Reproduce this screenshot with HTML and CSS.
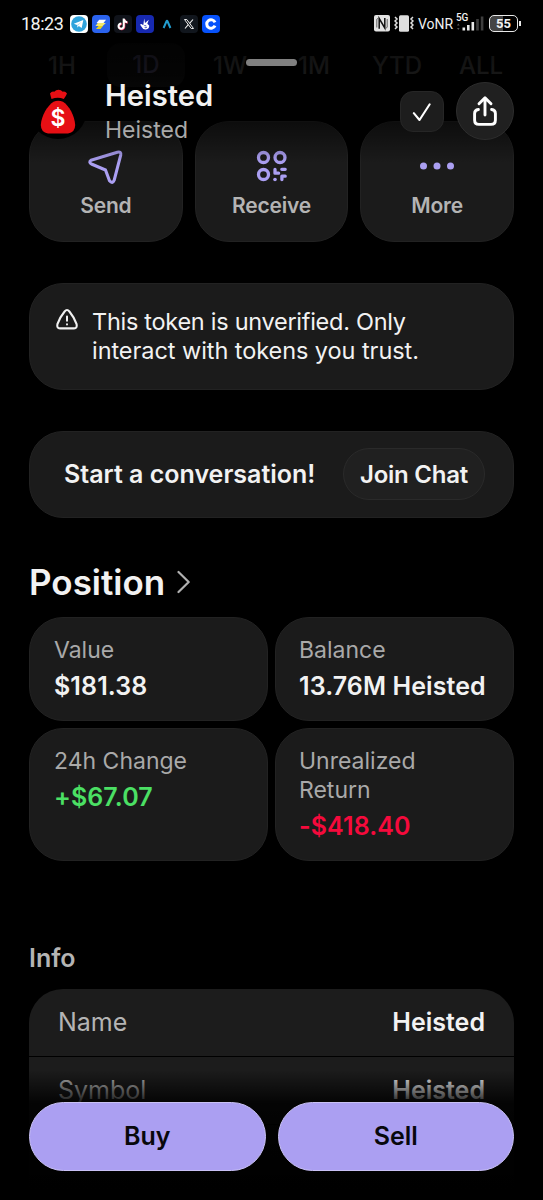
FILE: index.html
```html
<!DOCTYPE html>
<html lang="en">
<head>
<meta charset="utf-8">
<title>Heisted</title>
<link rel="stylesheet" href="styles.css">
</head>
<body>
<div class="screen">
  <main class="content">
    <nav class="ranges">
      <span class="range">1H</span>
      <span class="range range-active">1D</span>
      <span class="range">1W</span>
      <span class="range">1M</span>
      <span class="range">YTD</span>
      <span class="range">ALL</span>
    </nav>

    <section class="actions">
      <div class="card action">
        <svg class="action-icon" width="38" height="38" viewBox="0 0 38 38" fill="none" stroke="#ab9ff2" stroke-width="3.1" stroke-linejoin="round"><path d="M4 12.200L30.300 4.200Q34.500 3.200 33.700 7.100L27.200 32.200Q25.500 36.200 22.500 32.800L18.500 22L5 16.300Q1.200 14.300 4 12.200Z"/></svg>
        <span>Send</span>
      </div>
      <div class="card action">
        <svg class="action-icon receive-icon" width="38" height="38" viewBox="0 0 38 38"><g fill="none" stroke="#ab9ff2" stroke-width="3.3"><circle cx="10.500" cy="9.500" r="5"/><circle cx="27" cy="9.500" r="5"/><circle cx="10.500" cy="26.500" r="5"/></g><g fill="none" stroke="#ab9ff2" stroke-width="3.300" stroke-linecap="round" stroke-linejoin="round"><path d="M22 21.500v3.700h3.600M28.800 21.300h3.400M28.900 31.500v-3.300h3.300"/></g><circle cx="22" cy="31.500" r="1.800" fill="#ab9ff2"/></svg>
        <span class="receive">Receive</span>
      </div>
      <div class="card action">
        <svg class="action-icon" width="38" height="38" viewBox="0 0 38 38" fill="#ab9ff2"><circle cx="5.500" cy="18" r="3.500"/><circle cx="19" cy="18" r="3.500"/><circle cx="32.500" cy="18" r="3.500"/></svg>
        <span>More</span>
      </div>
    </section>

    <section class="card warning">
      <svg class="warning-icon" width="24" height="24" viewBox="0 0 24 24" fill="none" stroke="#f0f0f0" stroke-width="2.100" stroke-linecap="round" stroke-linejoin="round"><path d="M9.600 3.500Q12 .6 14.400 3.500Q19 9 21.600 16.200Q22.500 20.300 19 20.400H5Q1.500 20.300 2.400 16.200Q5 9 9.600 3.500Z"/><path d="M12 8.500v4.200M12 16.200v.2" stroke-width="2"/></svg>
      <p><span class="line-first">This token is unverified. Only</span><br>interact with tokens you trust.</p>
    </section>

    <section class="card chat">
      <span class="chat-text">Start a conversation!</span>
      <button class="join">Join Chat</button>
    </section>

    <h2 class="heading">Position
      <svg width="14" height="24" viewBox="0 0 14 24" fill="none" stroke="#b0b0b0" stroke-width="2.200" stroke-linecap="round" stroke-linejoin="round"><path d="M1.500 2L11.700 12L1.500 22"/></svg>
    </h2>

    <section class="stats">
      <div class="card stat"><span class="label">Value</span><span class="value">$181.38</span></div>
      <div class="card stat"><span class="label">Balance</span><span class="value">13.76M Heisted</span></div>
      <div class="card stat"><span class="label">24h Change</span><span class="value gain">+$67.07</span></div>
      <div class="card stat"><span class="label">Unrealized<br>Return</span><span class="value loss">-$418.40</span></div>
    </section>

    <h3 class="subheading">Info</h3>
    <section class="info">
      <div class="row"><span class="row-name">Name</span><span class="row-value">Heisted</span></div>
      <div class="row"><span class="row-name">Symbol</span><span class="row-value">Heisted</span></div>
      <div class="row"></div>
    </section>
  </main>

  <header class="top">
    <div class="status">
      <span class="clock">18:23</span>
      <div class="apps">
        <svg width="18" height="18" viewBox="0 0 18 18"><rect width="18" height="18" rx="4" fill="#fff"/><circle cx="9" cy="9" r="7.800" fill="#2fa3dc"/><path d="M3.800 8.700L13.300 5L11.700 13L8.800 11L7.400 12.400L7 10Z" fill="#fff"/><path d="M7 10L11.500 6.700L8 10.500L7.400 12.400Z" fill="#a9d6ee"/></svg>
        <svg width="18" height="18" viewBox="0 0 18 18"><rect width="18" height="18" rx="4" fill="#2b63ee"/><path d="M7.200 4.800H14L11.500 8H4.600Z" fill="#fff"/><path d="M5.700 8H13.800L10.700 11H3.500Z" fill="#f5e96b"/><path d="M6.500 11H11L8.500 14H4Z" fill="#e8d21d"/></svg>
        <svg width="18" height="18" viewBox="0 0 18 18"><rect width="18" height="18" rx="4" fill="#10131a"/><g fill="none" stroke-width="2"><path d="M9.700 3.500V11.200A2.600 2.600 0 1 1 7.200 8.600M9.700 4Q10.500 7 13.200 7.200" stroke="#f33a65" transform="translate(.6 .5)"/><path d="M9.700 3.500V11.200A2.600 2.600 0 1 1 7.200 8.600M9.700 4Q10.500 7 13.200 7.200" stroke="#fff"/></g></svg>
        <svg width="18" height="18" viewBox="0 0 18 18"><rect width="18" height="18" rx="4" fill="#1729b0"/><path d="M8.200 3.500L9 8L12.800 4.800L11.300 8.700L13.200 10.500Q13.500 13.800 9.800 14.600Q7 14.800 5.700 12L4 9.500L5.500 9L7.300 10.300Z" fill="#fff"/><path d="M8.300 10.500l2 .4M8.700 12.500q1.300.6 2.200-.3" stroke="#1729b0" stroke-width=".8" fill="none"/></svg>
        <svg width="18" height="18" viewBox="0 0 18 18"><path d="M5.600 13L8.500 6.300Q9 5.400 9.500 6.300L12.400 13" fill="none" stroke="#239ed0" stroke-width="2"/></svg>
        <svg width="18" height="18" viewBox="0 0 18 18"><rect width="18" height="18" rx="4" fill="#11161d"/><path d="M4.500 4.500H6.800L13.500 13.500H11.200Z" fill="none" stroke="#eee" stroke-width="1"/><path d="M13 4.500L9.600 8.400M8.300 9.700L5 13.500" stroke="#eee" stroke-width="1.100"/></svg>
        <svg width="18" height="18" viewBox="0 0 18 18"><rect width="18" height="18" rx="4" fill="#0752fb"/><path d="M13 7.300A4.300 4.300 0 1 0 13 10.700" fill="none" stroke="#fff" stroke-width="3"/></svg>
      </div>
      <div class="signals">
        <svg class="nfc" width="16" height="17" viewBox="0 0 16 17"><rect width="16" height="16.500" rx="2" fill="#e3e3e3"/><path d="M5.200 13.800V3.500L10.800 13V3" fill="none" stroke="#111" stroke-width="1.500"/><path d="M4.500 3L2.800 4.200V12.500M11.500 13.500L13.200 12.300V4" fill="none" stroke="#444" stroke-width=".8"/></svg>
        <svg class="vibrate" width="20" height="17" viewBox="0 0 20 17"><rect x="5" y=".3" width="10" height="16.400" rx="1.500" fill="#dedede"/><path d="M1 2l2 2-2 2 2 2-2 2 2 2-2 2M19 2l-2 2 2 2-2 2 2 2-2 2 2 2" fill="none" stroke="#dedede" stroke-width="1.500"/></svg>
        <span class="vonr">VoNR</span>
        <span class="cell"><span class="gen">5G</span><svg width="28" height="17" viewBox="0 0 28 17"><path d="M1 10.500l1.300-2 1.300 2zM1 13l1.300 2 1.300-2z" fill="#555"/><g fill="#e8e8e8"><rect x="6.500" y="12.500" width="2.600" height="3"/><rect x="11" y="10" width="2.600" height="5.500"/><rect x="15.500" y="7" width="2.600" height="8.500"/></g><g fill="#3d3d3d"><rect x="20.200" y="4" width="2.600" height="11.500"/><rect x="24.800" y="1.500" width="2.600" height="14"/></g></svg></span>
        <span class="battery">55</span>
      </div>
    </div>
    <div class="grabber"></div>
    <div class="title-row">
      <svg class="token" width="58" height="58" viewBox="0 0 58 58"><circle cx="29" cy="29" r="29" fill="#000"/><g fill="#e60f14"><path d="M22.500 18Q21.500 14.500 21 12.500Q23 9.800 25.200 10.800Q27 8.700 29.500 8.700Q32 8.700 33.800 10.800Q36 9.800 38 12.500Q37 15 34.800 18Q29 15.500 22.500 18Z"/><path d="M24.500 20.800Q29 18.800 34 20.800C40.500 25 45.500 35 46.200 44Q46 51.500 39 52.500H19Q12 51.500 11.800 44C12.500 35 18 25 24.500 20.800Z"/></g><text x="29" y="45" text-anchor="middle" class="dollar">$</text></svg>
      <div class="names"><h1>Heisted</h1><p>Heisted</p></div>
      <div class="check"><svg width="22" height="22" viewBox="0 0 22 22" fill="none" stroke="#fff" stroke-width="2.100" stroke-linecap="round" stroke-linejoin="round"><path d="M2.800 12.200L8.500 19L18.700 3.300"/></svg></div>
      <div class="share"><svg width="30" height="34" viewBox="0 0 30 34" fill="none" stroke="#fff" stroke-width="2.900" stroke-linecap="round" stroke-linejoin="round"><path d="M15 21V4.500M9 9.700L15 3.700L21 9.700M8.400 15.500Q4.600 16 4.600 19.500V26Q4.600 30.400 9 30.400H21Q25.400 30.400 25.400 26V19.500Q25.400 16 21.600 15.500"/></svg></div>
    </div>
  </header>

  <footer class="bottom">
    <button class="trade">Buy</button>
    <button class="trade">Sell</button>
  </footer>
</div>
</body>
</html>
```
FILE: styles.css
```css
* { box-sizing: border-box; }
body, h1, h2, h3, p { margin: 0; }
body { background: #000; font-family: Inter, "Liberation Sans", sans-serif; color: #f2f2f2; }
button { font-family: inherit; color: inherit; margin: 0; padding: 0; }
svg { display: block; flex: none; }

.screen { position: relative; width: 543px; height: 1200px; overflow: hidden; background: #000; }
.content { padding: 43px 29px 0; }
.card { background: #1b1b1b; border: 1px solid #222; border-radius: 34px; }

.ranges { display: grid; grid-template-columns: 66px 102px 66px 102px 64px 104px; width: 504px; height: 44px; align-items: center; text-align: center; font-size: 24px; font-weight: 500; color: #999; }
.range-active { justify-self: center; width: 78px; height: 44px; line-height: 44px; border-radius: 14px; background: #1c1c1c; color: #8f87c4; }

.actions { display: grid; grid-template-columns: repeat(3, 1fr); gap: 12px; margin-top: 34px; }
.action { height: 121px; display: flex; flex-direction: column; align-items: center; padding-top: 26px; font-size: 21px; line-height: 26px; font-weight: 600; letter-spacing: -.2px; color: #b4b4b4; }
.action span { margin-top: 7px; }
.receive-icon { margin-left: 2px; }

.warning { display: flex; gap: 12px; height: 107px; margin-top: 41px; padding: 23px 25px; font-size: 23.500px; line-height: 29px; }
.warning p { padding-left: 1px; letter-spacing: -.06px; }
.line-first { letter-spacing: -.28px; }
.warning-icon { margin-top: 1px; }

.chat { display: flex; align-items: center; justify-content: space-between; height: 87px; margin-top: 41px; padding: 0 28px 1px 34px; font-size: 25px; font-weight: 600; }
.join { width: 142px; height: 52px; border: 1px solid #2a2a2a; border-radius: 26px; background: #202020; font-size: 24px; font-weight: 600; letter-spacing: -.25px; }

.heading { display: flex; align-items: center; gap: 12px; height: 44px; margin-top: 42px; font-size: 35px; font-weight: 600; }

.stats { display: grid; grid-template-columns: 1fr 1fr; gap: 7px; margin-top: 13px; grid-template-rows: 104px 133px; }
.stat { display: flex; flex-direction: column; gap: 7px; padding: 18px 0 0 24px; line-height: 29px; }
.stat:nth-child(even) { padding-left: 23px; }
.label { font-size: 23px; color: #a9a9a9; }
.value { font-size: 25px; font-weight: 600; letter-spacing: .1px; }
.gain { color: #4be064; }
.loss { color: #f50a3c; }

.subheading { margin-top: 83px; height: 29px; line-height: 29px; font-size: 25px; font-weight: 600; color: #b4b4b4; }
.info { margin-top: 16px; border-radius: 34px 34px 0 0; overflow: hidden; display: grid; gap: 1px; }
.row { display: flex; align-items: center; justify-content: space-between; height: 67px; padding: 0 29px 1px; background: #1c1c1c; font-size: 25px; }
.row-name { color: #b4b4b4; }
.row-value { font-weight: 600; }

.top { position: absolute; inset: 0 0 auto; height: 165px; background: linear-gradient(#000 0, rgba(0,0,0,.87) 65px, rgba(0,0,0,.85) 75px, rgba(0,0,0,.55) 121px, rgba(0,0,0,0) 163px); }
.status { display: flex; align-items: center; height: 47px; padding: 0 25px 0 21px; }
.clock { width: 49px; font: 400 18px Roboto, sans-serif; letter-spacing: -.5px; }
.apps { display: flex; gap: 4px; }
.signals { display: flex; align-items: center; margin-left: auto; }
.vibrate { margin-left: 4px; }
.vonr { margin-left: 4px; width: 38px; font: 400 14px Roboto, sans-serif; color: #f0f0f0; }
.cell { position: relative; }
.gen { position: absolute; left: 0; top: -3px; font: 500 10px Roboto, sans-serif; letter-spacing: -.3px; }
.battery { position: relative; margin-left: 5px; width: 29px; height: 17px; border: 1.5px solid #e8e8e8; border-radius: 5px; background: linear-gradient(90deg, #444 50%, #000 50%); text-align: center; font: 700 13px/15px Roboto, sans-serif; }
.battery::after { content: ""; position: absolute; right: -4px; top: 5px; width: 2px; height: 5px; background: #e8e8e8; }
.grabber { width: 51px; height: 7px; margin: 12px auto 0; border-radius: 4px; background: #808080; }
.title-row { display: flex; align-items: flex-start; padding: 13px 29px 0; }
.title-row .token { margin-top: 2px; }
.dollar { font: 600 23px Inter, sans-serif; fill: #fff; }
.names { margin-left: 18px; flex: 1; }
.names h1 { font-size: 29.200px; line-height: 34px; font-weight: 600; }
.names p { font-size: 23px; line-height: 28px; margin-top: 3px; color: #a9a9a9; }
.check { display: grid; place-items: center; width: 44px; height: 41px; margin: 12px 12px 0 0; border: 1px solid #262626; border-radius: 13px; background: #1d1d1d; }
.share { display: grid; place-items: center; width: 58px; height: 58px; margin-top: 3px; border: 1px solid #2d2d2d; border-radius: 50%; background: #202020; }

.bottom { position: absolute; inset: auto 0 0; height: 130px; padding: 32px 29px 0; display: grid; grid-template-columns: 1fr 1fr; gap: 12px; background: linear-gradient(rgba(0,0,0,0) 0, rgba(0,0,0,.85) 33px, rgba(0,0,0,.93) 60px, #000 120px); }
.trade { height: 69px; padding-bottom: 1px; border: 1px solid #c9c1f5; border-radius: 35px; background: #ab9ff2; color: #08080c; font-size: 25px; font-weight: 600; }
```
